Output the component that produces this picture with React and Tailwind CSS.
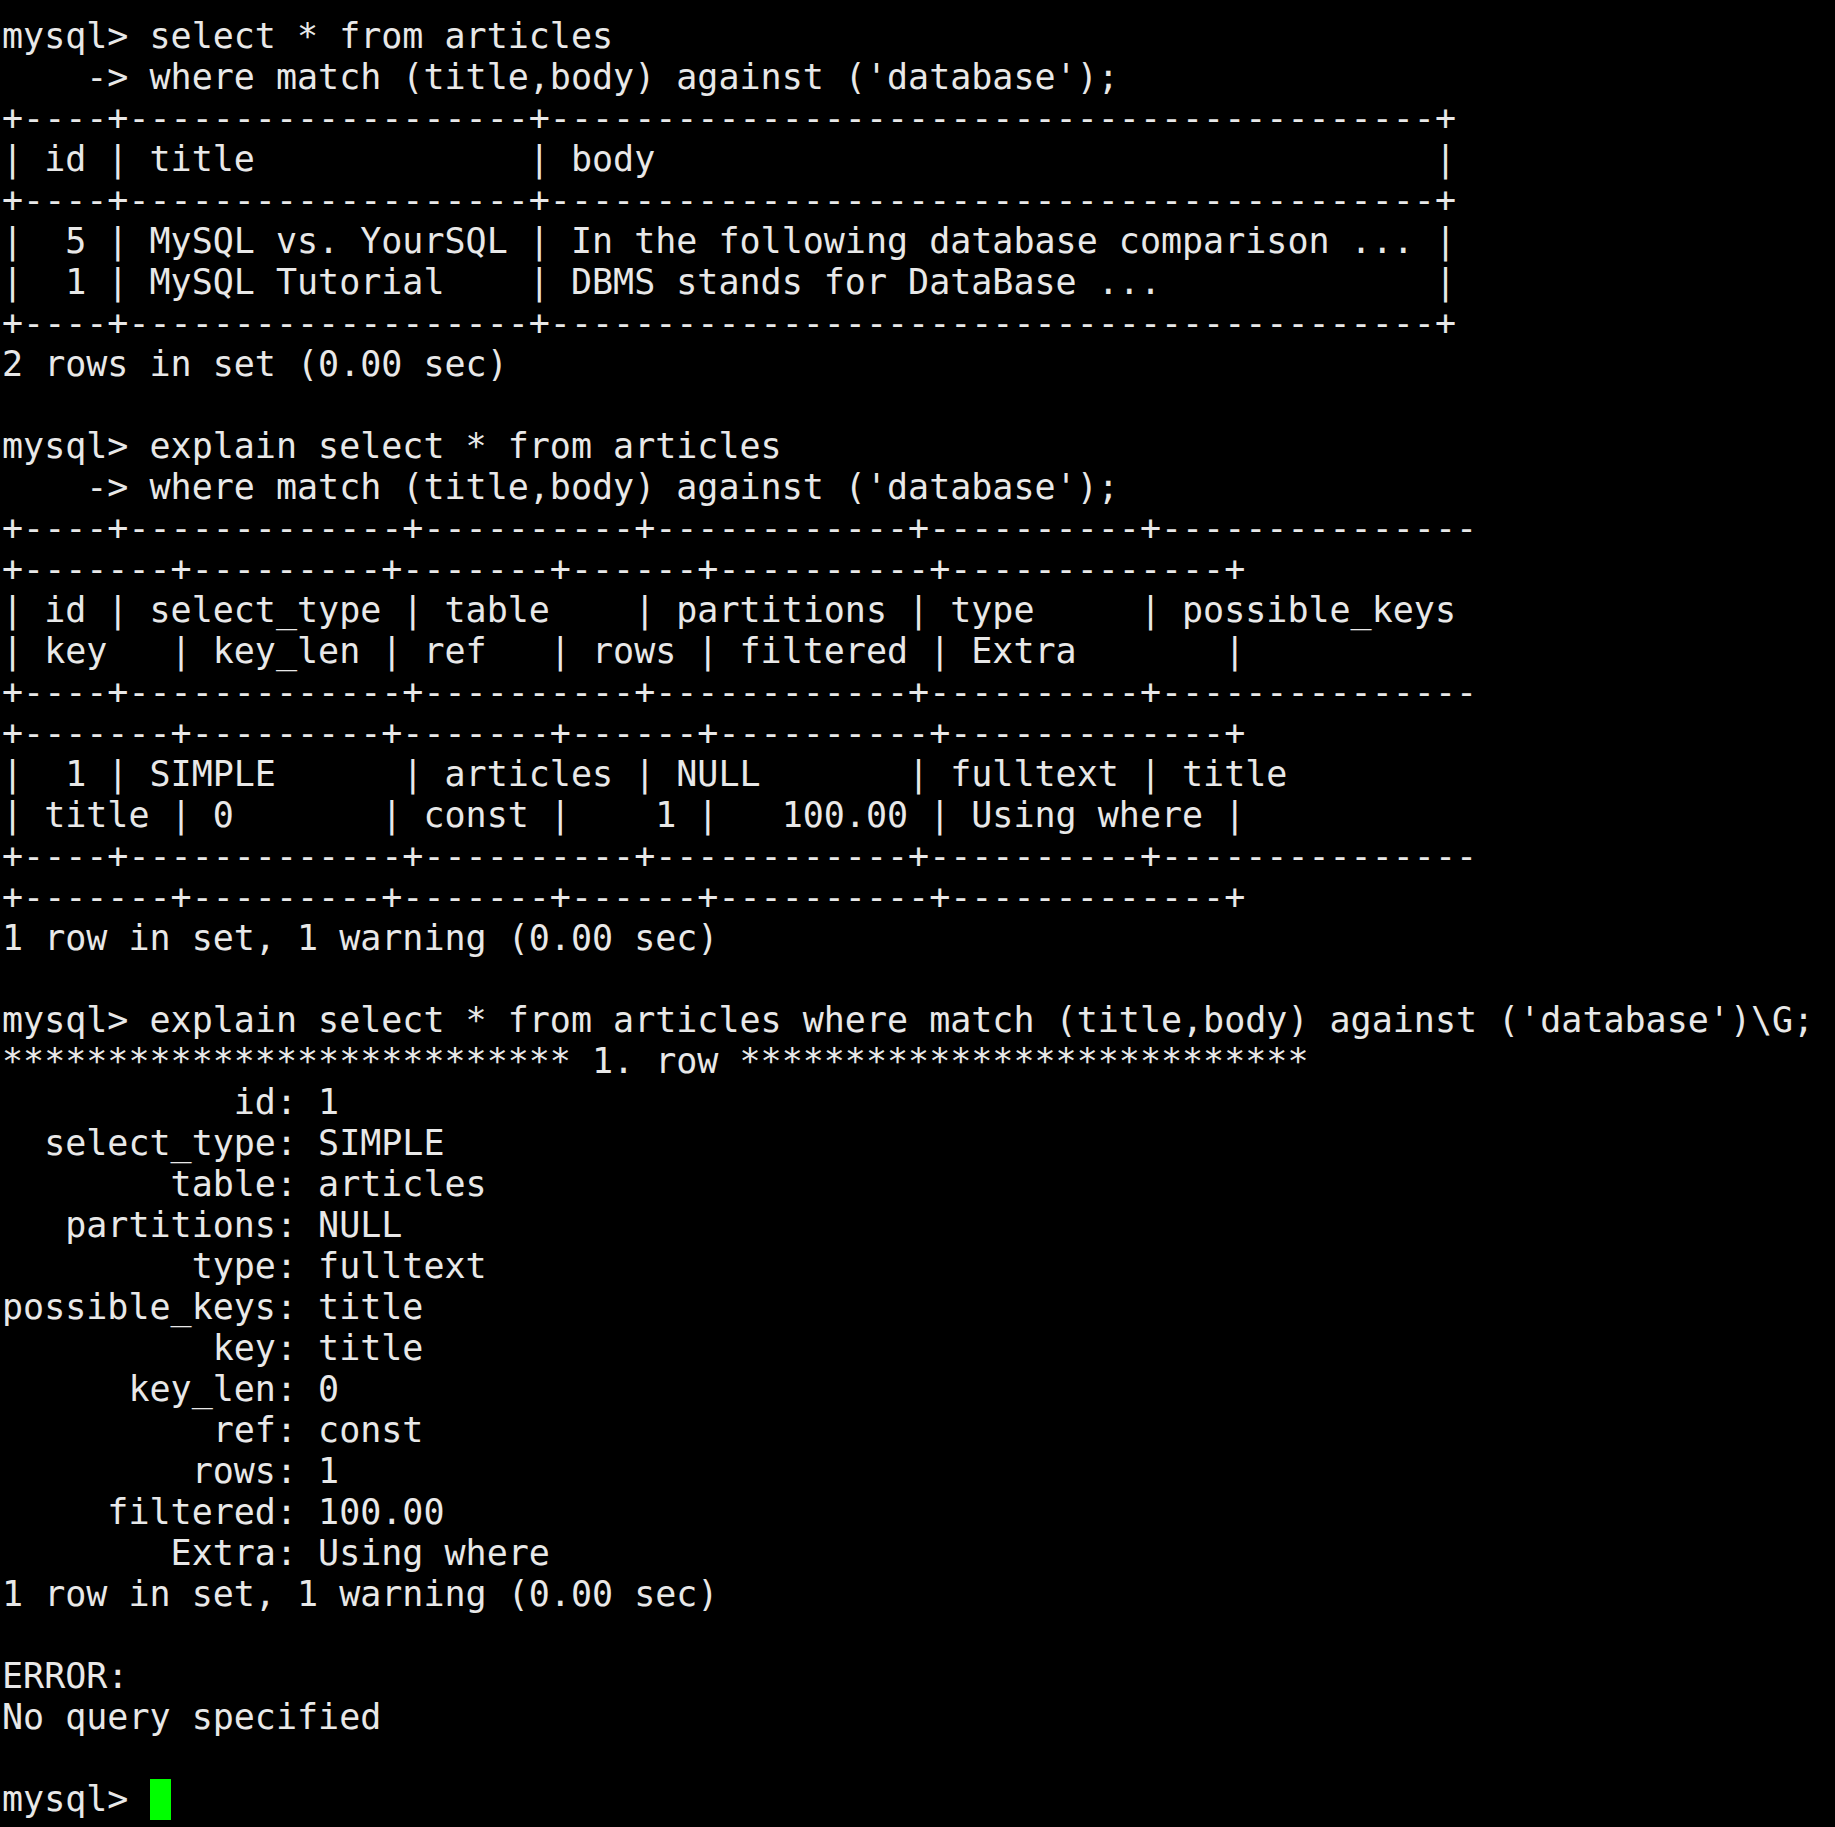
import React from 'react';

const lines = [
  "mysql> select * from articles",
  "    -> where match (title,body) against ('database');",
  "+----+-------------------+------------------------------------------+",
  "| id | title             | body                                     |",
  "+----+-------------------+------------------------------------------+",
  "|  5 | MySQL vs. YourSQL | In the following database comparison ... |",
  "|  1 | MySQL Tutorial    | DBMS stands for DataBase ...             |",
  "+----+-------------------+------------------------------------------+",
  "2 rows in set (0.00 sec)",
  "",
  "mysql> explain select * from articles",
  "    -> where match (title,body) against ('database');",
  "+----+-------------+----------+------------+----------+---------------",
  "+-------+---------+-------+------+----------+-------------+",
  "| id | select_type | table    | partitions | type     | possible_keys ",
  "| key   | key_len | ref   | rows | filtered | Extra       |",
  "+----+-------------+----------+------------+----------+---------------",
  "+-------+---------+-------+------+----------+-------------+",
  "|  1 | SIMPLE      | articles | NULL       | fulltext | title         ",
  "| title | 0       | const |    1 |   100.00 | Using where |",
  "+----+-------------+----------+------------+----------+---------------",
  "+-------+---------+-------+------+----------+-------------+",
  "1 row in set, 1 warning (0.00 sec)",
  "",
  "mysql> explain select * from articles where match (title,body) against ('database')\\G;",
  "*************************** 1. row ***************************",
  "           id: 1",
  "  select_type: SIMPLE",
  "        table: articles",
  "   partitions: NULL",
  "         type: fulltext",
  "possible_keys: title",
  "          key: title",
  "      key_len: 0",
  "          ref: const",
  "         rows: 1",
  "     filtered: 100.00",
  "        Extra: Using where",
  "1 row in set, 1 warning (0.00 sec)",
  "",
  "ERROR:",
  "No query specified",
  "",
];

const App = () => {
  return (
    <div className="min-h-screen bg-black pt-[16px] pl-[2px] text-[#e8e8e8] text-[35px] leading-[41px] font-['DejaVu_Sans_Mono',monospace] whitespace-pre">
      {lines.map((line, i) => (
        <div key={i} className="h-[41px]">{line}</div>
      ))}
      <div className="h-[41px] flex">
        <span>mysql&gt; </span>
        <span className="inline-block w-[21px] h-[41px] bg-[#00ff00]" />
      </div>
    </div>
  );
};

export default App;
